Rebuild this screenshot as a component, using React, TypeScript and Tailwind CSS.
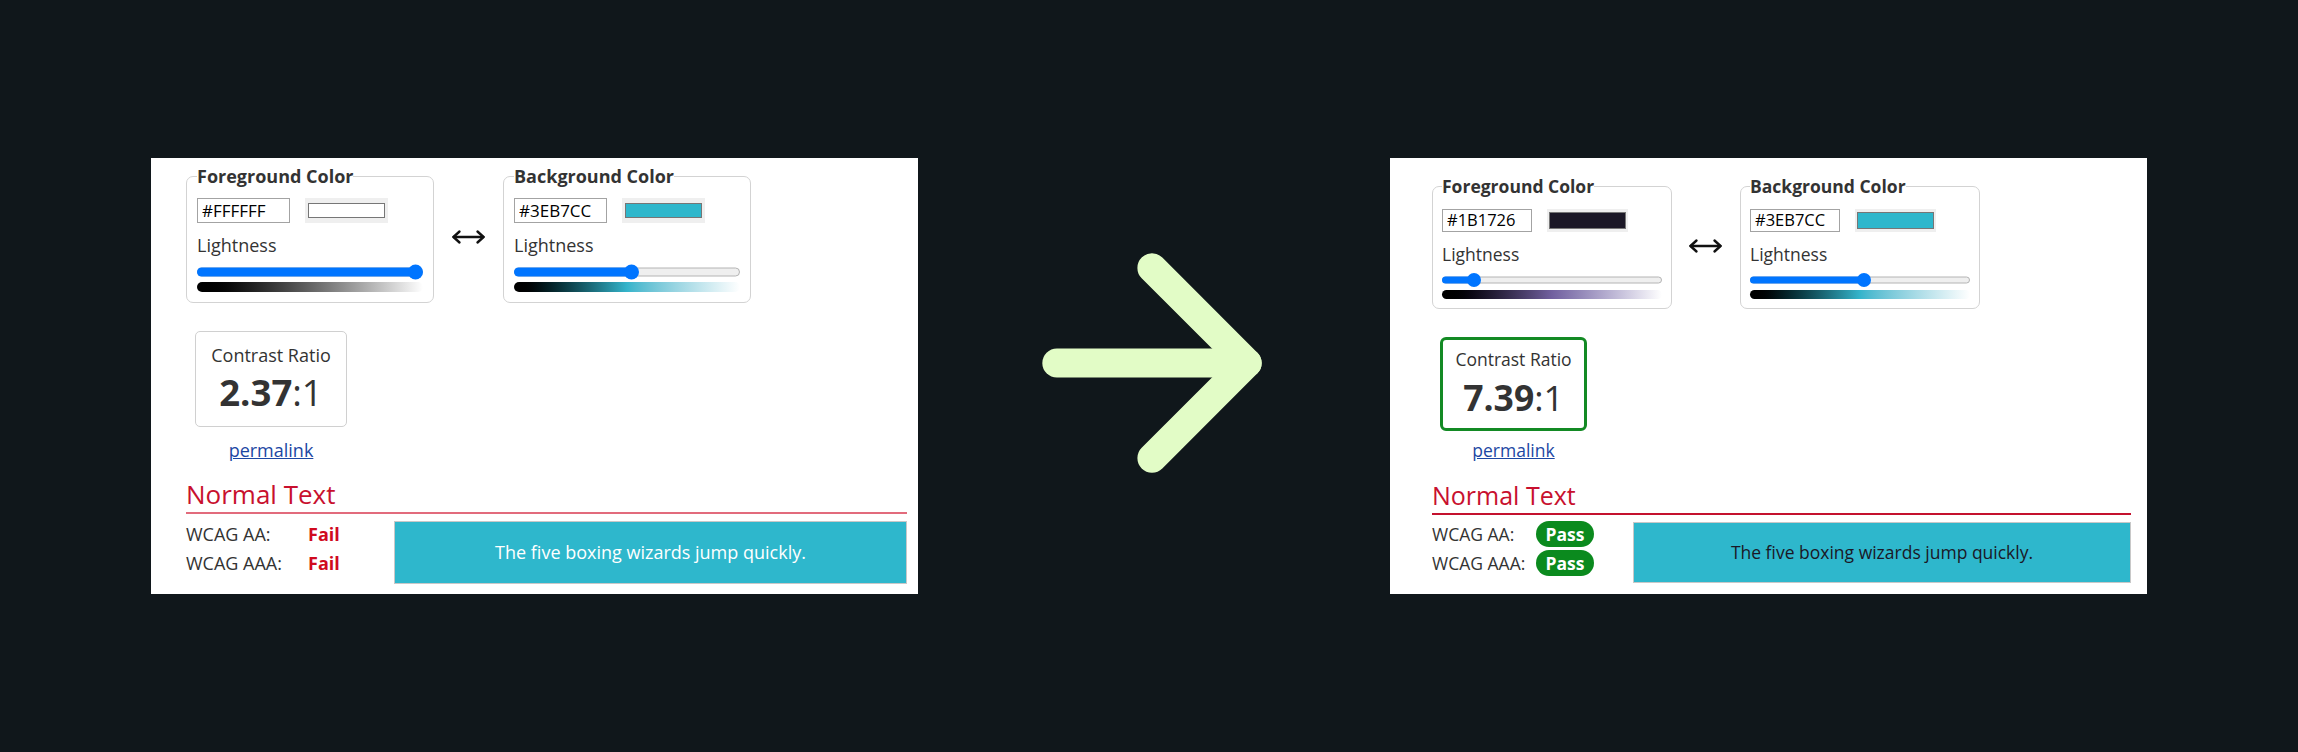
import React from "react";

type Sizes = {
  panel: string;
  fieldset: string;
  legend: string;
  inputRow: string;
  input: string;
  swatch: string;
  label: string;
  slider: string;
  track: string;
  thumbCls: string;
  thumb: number;
  gradient: string;
  arrow: string;
  box: string;
  boxLabel: string;
  ratio: string;
  permalink: string;
  heading: string;
  rows: string;
  labelCol: string;
  rowText: string;
  labelW: string;
  sample: string;
};

const big: Sizes = {
  panel: "w-[767px] pt-[6px] pl-[35px] pr-[11px]",
  fieldset: "w-[248px] px-[10px] pb-[10px]",
  legend: "text-[18px] leading-[24px]",
  inputRow: "mt-[10px]",
  input: "w-[93px] h-[25px] text-[17px] px-[4px]",
  swatch: "ml-[15px] w-[83px] h-[25px] px-[3px] py-[5px]",
  label: "mt-[10px] text-[18px] leading-[24px]",
  slider: "mt-[7px] h-[16px]",
  track: "h-[9px]",
  thumbCls: "w-[15px] h-[15px]",
  thumb: 15,
  gradient: "mt-[2px] h-[10px]",
  arrow: "mt-[65px] mx-[17px]",
  box: "mt-[28px] ml-[9px] w-[152px] h-[96px] pt-[11px] border border-[#d0d0d0] rounded-[5px]",
  boxLabel: "text-[18px] leading-[24px]",
  ratio: "mt-[5px] text-[36.5px] leading-[40px]",
  permalink: "mt-[11px] ml-[9px] w-[152px] text-[18px] leading-[24px]",
  heading: "mt-[15px] text-[26px] leading-[34px] pb-[1px] border-b-2 border-[#e26b7c]",
  rows: "mt-[6px]",
  labelCol: "w-[208px]",
  rowText: "text-[18px] leading-[29px]",
  labelW: "w-[122px]",
  sample: "mt-[1px] h-[63px] text-[18px]",
};

const small: Sizes = {
  panel: "w-[757px] pt-[17px] pl-[42px] pr-[16px]",
  fieldset: "w-[240px] px-[9px] pb-[9px]",
  legend: "text-[17.5px] leading-[23px]",
  inputRow: "mt-[11px]",
  input: "w-[90px] h-[23px] text-[16.5px] px-[4px]",
  swatch: "ml-[15px] w-[81px] h-[23px] px-[2px] py-[3px]",
  label: "mt-[11px] text-[17.5px] leading-[23px]",
  slider: "mt-[7px] h-[14px]",
  track: "h-[7px]",
  thumbCls: "w-[14px] h-[14px]",
  thumb: 14,
  gradient: "mt-[3px] h-[9px]",
  arrow: "mt-[63px] ml-[16px] mr-[17px]",
  box: "mt-[28px] ml-[8px] w-[147px] h-[94px] pt-[8px] border-[3px] border-[#138a24] rounded-[6px]",
  boxLabel: "text-[17.5px] leading-[23px]",
  ratio: "mt-[7px] text-[35.5px] leading-[38px]",
  permalink: "mt-[8px] ml-[8px] w-[147px] text-[17.5px] leading-[23px]",
  heading: "mt-[17px] text-[25px] leading-[33px] pb-[1px] border-b-2 border-[#c4112e]",
  rows: "mt-[5px]",
  labelCol: "w-[201px]",
  rowText: "text-[17.5px] leading-[28.5px]",
  labelW: "w-[104px]",
  sample: "mt-[2px] h-[61px] text-[17.5px]",
};

interface ColorBoxProps {
  s: Sizes;
  title: string;
  hex: string;
  fill: string;
  lightness: number;
  gradient: string;
}

const Slider = ({ s, value }: { s: Sizes; value: number }) => (
  <div className={`relative ${s.slider}`}>
    <div
      className={`absolute inset-x-0 top-1/2 -translate-y-1/2 rounded-full bg-[#efefef] border border-[#b4b4b4] ${s.track}`}
    />
    <div
      className={`absolute left-0 top-1/2 -translate-y-1/2 rounded-full bg-[#0075ff] ${s.track}`}
      style={{ width: `calc(${value} * (100% - ${s.thumb}px) + ${s.thumb / 2}px)` }}
    />
    <div
      className={`absolute top-1/2 -translate-y-1/2 rounded-full bg-[#0075ff] ${s.thumbCls}`}
      style={{ left: `calc(${value} * (100% - ${s.thumb}px))` }}
    />
  </div>
);

const ColorBox = ({ s, title, hex, fill, lightness, gradient }: ColorBoxProps) => (
  <fieldset className={`shrink-0 border border-[#d3d3d3] rounded-[7px] ${s.fieldset}`}>
    <legend className={`font-bold text-[#333] ${s.legend}`}>{title}</legend>
    <div className={`flex ${s.inputRow}`}>
      <input
        readOnly
        value={hex}
        className={`border border-[#a3a3a3] bg-white text-black outline-none ${s.input}`}
      />
      <div className={`bg-[#efefef] ${s.swatch}`}>
        <div className="h-full w-full border border-[#767676]" style={{ background: fill }} />
      </div>
    </div>
    <div className={`text-[#333] ${s.label}`}>Lightness</div>
    <Slider s={s} value={lightness} />
    <div className={`rounded-full ${gradient} ${s.gradient}`} />
  </fieldset>
);

const SwapArrow = ({ s }: { s: Sizes }) => (
  <svg
    className={`shrink-0 ${s.arrow}`}
    width="35"
    height="16"
    viewBox="0 0 35 16"
    fill="none"
    stroke="#111"
    strokeWidth="2.4"
    strokeLinecap="round"
    strokeLinejoin="round"
  >
    <path d="M2.5 8H32.5" />
    <path d="M8.5 2.5L2.5 8L8.5 13.5" />
    <path d="M26.5 2.5L32.5 8L26.5 13.5" />
  </svg>
);

interface PanelProps {
  s: Sizes;
  className?: string;
  fg: string;
  fgFill: string;
  fgLight: number;
  fgGradient: string;
  ratio: string;
  pass: boolean;
}

const Panel = ({ s, className, fg, fgFill, fgLight, fgGradient, ratio, pass }: PanelProps) => (
  <div className={`h-[436px] shrink-0 bg-white text-[#333] ${s.panel} ${className ?? ""}`}>
    <div className="flex items-start">
      <ColorBox
        s={s}
        title="Foreground Color"
        hex={fg}
        fill={fgFill}
        lightness={fgLight}
        gradient={fgGradient}
      />
      <SwapArrow s={s} />
      <ColorBox
        s={s}
        title="Background Color"
        hex="#3EB7CC"
        fill="#2eb7cc"
        lightness={0.52}
        gradient="bg-linear-to-r from-black via-[#34b4cb] to-white"
      />
    </div>

    <div className={`text-center ${s.box}`}>
      <div className={s.boxLabel}>Contrast Ratio</div>
      <div className={s.ratio}>
        <span className="font-bold">{ratio}</span>:1
      </div>
    </div>
    <div className={`text-center ${s.permalink}`}>
      <a href="#" className="text-[#1c47a3] underline">
        permalink
      </a>
    </div>

    <h2 className={`text-[#c8102e] ${s.heading}`}>Normal Text</h2>

    <div className={`flex ${s.rows}`}>
      <div className={`shrink-0 ${s.labelCol} ${s.rowText}`}>
        {["WCAG AA:", "WCAG AAA:"].map((label) => (
          <div key={label} className="flex items-center">
            <span className={s.labelW}>{label}</span>
            {pass ? (
              <span className="w-[58px] h-[26px] rounded-full bg-[#0b8a1e] text-white font-bold text-center leading-[26px]">
                Pass
              </span>
            ) : (
              <span className="font-bold text-[#d00a1e]">Fail</span>
            )}
          </div>
        ))}
      </div>
      <div
        className={`flex flex-1 items-center justify-center border border-[#c8c8c8] bg-[#2eb7cc] ${s.sample} ${
          pass ? "text-[#1b1726]" : "text-white"
        }`}
      >
        The five boxing wizards jump quickly.
      </div>
    </div>
  </div>
);

export default function App() {
  return (
    <div className="flex h-[752px] w-full items-center bg-[#10171b] pl-[151px] font-['Open_Sans',sans-serif]">
      <Panel
        s={big}
        fg="#FFFFFF"
        fgFill="#ffffff"
        fgLight={1}
        fgGradient="bg-linear-to-r from-black to-white"
        ratio="2.37"
        pass={false}
      />
      <svg
        className="ml-[71px] mb-[26px] shrink-0"
        width="326"
        height="326"
        viewBox="0 0 24 24"
        fill="none"
        stroke="#e2fcc6"
        strokeWidth="2.15"
        strokeLinecap="round"
        strokeLinejoin="round"
      >
        <path d="M5 12h14" />
        <path d="m12 5 7 7-7 7" />
      </svg>
      <Panel
        s={small}
        className="ml-[75px]"
        fg="#1B1726"
        fgFill="#1b1726"
        fgLight={0.12}
        fgGradient="bg-linear-to-r from-black via-[#71609f] to-white"
        ratio="7.39"
        pass
      />
    </div>
  );
}
